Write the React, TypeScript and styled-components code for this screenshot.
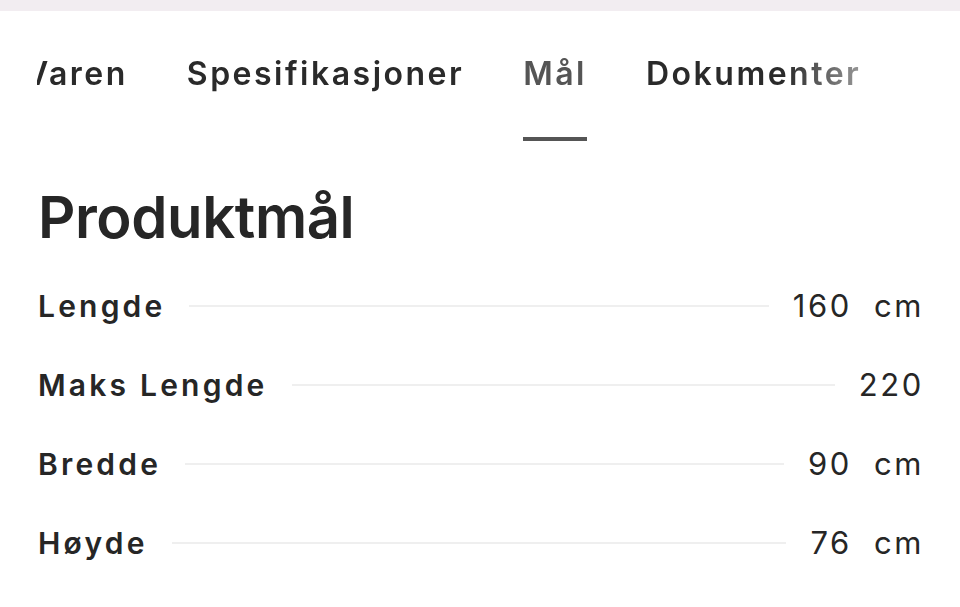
import React, { useLayoutEffect, useRef } from 'react';
import styled, { createGlobalStyle } from 'styled-components';

const GlobalStyle = createGlobalStyle`
  html, body {
    margin: 0;
    padding: 0;
    background: #ffffff;
  }
  body {
    font-family: Inter, "Noto Sans", "Liberation Sans", sans-serif;
    color: #262626;
    -webkit-font-smoothing: antialiased;
  }
`;

const Page = styled.div`
  width: 960px;
  height: 607px;
  overflow: hidden;
  background: #fff;
`;

const TopStrip = styled.div`
  height: 11px;
  background: #f2edf1;
`;

const TabBar = styled.nav`
  position: relative;
  margin-left: 37px;
  padding-top: 43px;
  overflow-x: auto;
  scrollbar-width: none;
  -webkit-mask-image: linear-gradient(to right, #000 calc(100% - 175px), rgba(0, 0, 0, 0.25) calc(100% - 65px));
  mask-image: linear-gradient(to right, #000 calc(100% - 175px), rgba(0, 0, 0, 0.25) calc(100% - 65px));

  &::-webkit-scrollbar {
    display: none;
  }
`;

const TabList = styled.div`
  display: flex;
  gap: 59px;
  width: max-content;
  padding-right: 400px;
`;

const Tab = styled.div<{ $active?: boolean }>`
  display: flex;
  flex-direction: column;
  align-items: center;
  font-size: 32px;
  line-height: 40px;
  font-weight: 600;
  letter-spacing: 2.5px;
  white-space: nowrap;
  color: ${({ $active }) => ($active ? '#555555' : '#2a2a2a')};

  &::after {
    content: '';
    display: block;
    margin-top: 43px;
    height: 4px;
    width: 100%;
    background: ${({ $active }) => ($active ? '#555555' : 'transparent')};
  }
`;

const Content = styled.section`
  padding: 0 36px 0 38px;
`;

const Heading = styled.h2`
  margin: 41px 0 14px;
  font-size: 58px;
  line-height: 70px;
  font-weight: 600;
  letter-spacing: -0.4px;
  color: #262626;
`;

const SpecRow = styled.div`
  display: flex;
  align-items: center;
  gap: 24px;
  height: 79px;
  font-size: 30px;
`;

const Label = styled.span`
  font-weight: 600;
  letter-spacing: 3.2px;
  white-space: nowrap;
  color: #262626;
`;

const Leader = styled.span`
  flex: 1;
  height: 2px;
  background: #efefef;
`;

const Value = styled.span`
  display: flex;
  gap: 22px;
  font-size: 31px;
  font-weight: 400;
  letter-spacing: 2.6px;
  color: #262626;
  white-space: nowrap;
`;

const tabs = ['Om Varen', 'Spesifikasjoner', 'Mål', 'Dokumenter'];

const specs: { label: string; value: string; unit?: string }[] = [
  { label: 'Lengde', value: '160', unit: 'cm' },
  { label: 'Maks Lengde', value: '220' },
  { label: 'Bredde', value: '90', unit: 'cm' },
  { label: 'Høyde', value: '76', unit: 'cm' },
];

export default function App() {
  const barRef = useRef<HTMLElement>(null);
  const specRef = useRef<HTMLDivElement>(null);

  // tab strip is scrolled so "Spesifikasjoner" sits 150px into the bar
  useLayoutEffect(() => {
    if (barRef.current && specRef.current) {
      barRef.current.scrollLeft = specRef.current.offsetLeft - 150;
    }
  }, []);

  return (
    <Page>
      <GlobalStyle />
      <TopStrip />
      <TabBar ref={barRef}>
        <TabList>
          {tabs.map((t, i) => (
            <Tab key={t} ref={i === 1 ? specRef : undefined} $active={t === 'Mål'}>
              {t}
            </Tab>
          ))}
        </TabList>
      </TabBar>
      <Content>
        <Heading>Produktmål</Heading>
        {specs.map((s) => (
          <SpecRow key={s.label}>
            <Label>{s.label}</Label>
            <Leader />
            <Value>
              <span>{s.value}</span>
              {s.unit && <span>{s.unit}</span>}
            </Value>
          </SpecRow>
        ))}
      </Content>
    </Page>
  );
}
